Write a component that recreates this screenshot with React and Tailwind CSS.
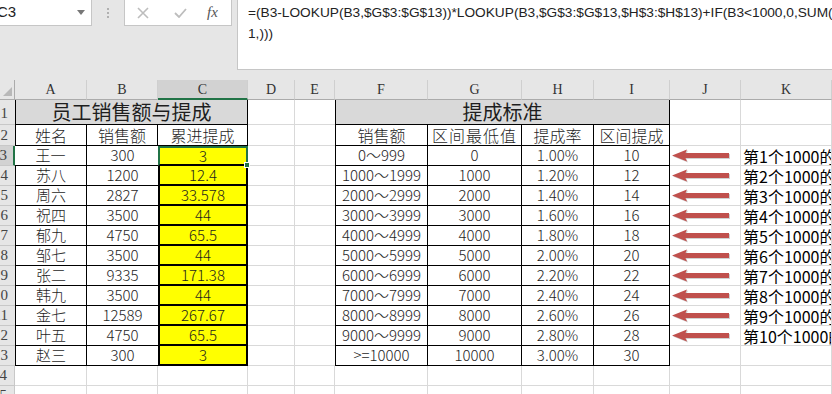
import { twMerge } from 'tailwind-merge'

// column widths: row header, A..K
const COLS = ['w-[15px]', 'w-[72px]', 'w-[71px]', 'w-[90px]', 'w-[47px]', 'w-[40px]', 'w-[93px]', 'w-[94px]', 'w-[72px]', 'w-[76px]', 'w-[71px]', 'w-[91px]']
const LETTERS = ['A', 'B', 'C', 'D', 'E', 'F', 'G', 'H', 'I', 'J', 'K']

const people = [
  ['王一', '300', '3'],
  ['苏八', '1200', '12.4'],
  ['周六', '2827', '33.578'],
  ['祝四', '3500', '44'],
  ['郁九', '4750', '65.5'],
  ['邹七', '3500', '44'],
  ['张二', '9335', '171.38'],
  ['韩九', '3500', '44'],
  ['金七', '12589', '267.67'],
  ['叶五', '4750', '65.5'],
  ['赵三', '300', '3'],
]

const rates = [
  ['0～999', '0', '1.00%', '10'],
  ['1000～1999', '1000', '1.20%', '12'],
  ['2000～2999', '2000', '1.40%', '14'],
  ['3000～3999', '3000', '1.60%', '16'],
  ['4000～4999', '4000', '1.80%', '18'],
  ['5000～5999', '5000', '2.00%', '20'],
  ['6000～6999', '6000', '2.20%', '22'],
  ['7000～7999', '7000', '2.40%', '24'],
  ['8000～8999', '8000', '2.60%', '26'],
  ['9000～9999', '9000', '2.80%', '28'],
  ['>=10000', '10000', '3.00%', '30'],
]

function Cell({ w, className, children }) {
  return (
    <div
      className={twMerge(
        'shrink-0 h-full flex items-center justify-center overflow-hidden whitespace-nowrap border-r border-b border-[#d9d9d9] text-[15px] font-light text-[#1e1e1e]',
        w,
        className
      )}
    >
      {children}
    </div>
  )
}

function RowHead({ n, className }) {
  return (
    <div
      className={twMerge(
        "shrink-0 w-[15px] h-full flex items-center justify-end pr-[7px] overflow-hidden bg-[#e6e6e6] border-r border-b border-[#c8c8c8] font-['Liberation_Serif',serif] text-[15px] text-[#444]",
        className
      )}
    >
      <span className="shrink-0">{n}</span>
    </div>
  )
}

function Arrow() {
  return (
    <svg width="62" height="16" viewBox="0 0 62 16">
      <path d="M2 8.5 L17 2.5 L15.5 6 L59 6 L59 11 L15.5 11 L17 14.5 Z" fill="rgba(0,0,0,0.18)" />
      <path d="M1 7.5 L16 1.5 L14.5 5 L58 5 L58 10 L14.5 10 L16 13.5 Z" fill="#c0504d" />
    </svg>
  )
}

function TopBar() {
  return (
    <div className="h-[80px] bg-[#e6e6e6] flex items-start">
      <div className="w-[92px] h-[26px] bg-white border-r border-b border-[#c6c6c6] flex items-center justify-between pr-[6px] overflow-hidden">
        <span className="-ml-[3px] text-[15px] text-[#222] font-['Liberation_Sans',sans-serif]">C3</span>
        <svg width="8" height="5" viewBox="0 0 8 5">
          <path d="M0 0 L8 0 L4 5 Z" fill="#777" />
        </svg>
      </div>
      <div className="w-[32px] h-[26px] flex flex-col items-center justify-center gap-[2px]">
        <span className="w-[2px] h-[2px] bg-[#b0b0b0]" />
        <span className="w-[2px] h-[2px] bg-[#b0b0b0]" />
        <span className="w-[2px] h-[2px] bg-[#b0b0b0]" />
      </div>
      <div className="w-[108px] h-[26px] bg-white border-x border-b border-[#c6c6c6] flex items-center pl-[12px]">
        <svg width="12" height="12" viewBox="0 0 12 12" className="mr-[25px]">
          <path d="M1 1 L11 11 M11 1 L1 11" stroke="#bdbdbd" strokeWidth="1.6" />
        </svg>
        <svg width="13" height="10" viewBox="0 0 13 10" className="mr-[20px]">
          <path d="M1 5 L5 9 L12 1" stroke="#bdbdbd" strokeWidth="1.8" fill="none" />
        </svg>
        <span className="italic font-['Liberation_Serif',serif] text-[15px] text-[#555]">fx</span>
      </div>
      <div className="ml-[5px] flex-1 h-[70px] bg-white border-l border-b border-[#c6c6c6] pl-[10px] pt-[2px] overflow-hidden font-['Liberation_Sans',sans-serif] text-[13.7px] leading-[21px] text-[#222]">
        <div className="whitespace-nowrap">=(B3-LOOKUP(B3,$G$3:$G$13))*LOOKUP(B3,$G$3:$G$13,$H$3:$H$13)+IF(B3&lt;1000,0,SUM(</div>
        <div className="whitespace-nowrap">1,)))</div>
      </div>
    </div>
  )
}

function ColumnHeader() {
  return (
    <div className="flex h-[20px]">
      <div className="shrink-0 w-[15px] h-full bg-[#e6e6e6] border-r border-b border-[#ababab] flex items-end justify-end pr-[2px] pb-[3px]">
        <svg width="9" height="9" viewBox="0 0 9 9">
          <path d="M9 0 L9 9 L0 9 Z" fill="#b8b8b8" />
        </svg>
      </div>
      {LETTERS.map((l, i) => (
        <div
          key={l}
          className={twMerge(
            "shrink-0 h-full flex items-center justify-center bg-[#e6e6e6] border-r border-b border-r-[#cfcfcf] border-b-[#ababab] font-['Liberation_Serif',serif] text-[14px] text-[#333]",
            COLS[i + 1],
            l === 'C' ? 'bg-[#d2d2d2] border-b-2 border-b-[#217346]' : ''
          )}
        >
          {l}
        </div>
      ))}
    </div>
  )
}

export default function App() {
  return (
    <div className="w-[832px] h-[394px] overflow-hidden bg-white font-['Noto_Sans_CJK_SC',sans-serif]">
      <TopBar />
      <ColumnHeader />

      {/* row 1: titles */}
      <div className="flex h-[25px]">
        <RowHead n="1" className="items-end -mb-[4px] border-r-0" />
        <Cell w="w-[233px]" className="bg-[#d9d9d9] border-l border-black text-[20px] font-normal">员工销售额与提成</Cell>
        <Cell w={COLS[4]} />
        <Cell w={COLS[5]} className="border-r-0" />
        <Cell w="w-[335px]" className="bg-[#d9d9d9] border-l border-black text-[20px] font-normal">提成标准</Cell>
        <Cell w={COLS[10]} />
        <Cell w={COLS[11]} />
      </div>

      {/* row 2: headers */}
      <div className="flex h-[21px]">
        <RowHead n="2" className="border-r-0" />
        <Cell w={COLS[1]} className="border-l border-black text-[16px]">姓名</Cell>
        <Cell w={COLS[2]} className="border-black text-[16px]">销售额</Cell>
        <Cell w={COLS[3]} className="border-black text-[16px]">累进提成</Cell>
        <Cell w={COLS[4]} />
        <Cell w={COLS[5]} className="border-r-0" />
        <Cell w={COLS[6]} className="border-l border-black text-[16px]">销售额</Cell>
        <Cell w={COLS[7]} className="border-black text-[16px] tracking-[1px]">区间最低值</Cell>
        <Cell w={COLS[8]} className="border-black text-[16px]">提成率</Cell>
        <Cell w={COLS[9]} className="border-black text-[16px]">区间提成</Cell>
        <Cell w={COLS[10]} />
        <Cell w={COLS[11]} />
      </div>

      {/* rows 3-13 */}
      {people.map((p, i) => {
        const selected = i === 0
        const r = rates[i]
        return (
          <div key={i} className="flex h-[20px]">
            <RowHead
              n={i + 3}
              className={selected ? 'bg-[#d2d2d2] border-r-2 border-r-[#217346] pr-[6px]' : 'border-r-0'}
            />
            <Cell w={COLS[1]} className={selected ? 'border-black' : 'border-l border-black'}>{p[0]}</Cell>
            <Cell w={COLS[2]} className="border-black border-r-0">{p[1]}</Cell>
            <Cell
              w={COLS[3]}
              className={
                selected
                  ? 'relative overflow-visible bg-[#ffff00] border-2 border-[#217346] border-b-black'
                  : 'bg-[#ffff00] border-x-2 border-b-2 border-black'
              }
            >
              {p[2]}
              {selected && (
                <span className="absolute -right-[4px] -bottom-[4px] w-[6px] h-[6px] bg-[#217346] border border-white" />
              )}
            </Cell>
            <Cell w={COLS[4]} />
            <Cell w={COLS[5]} className="border-r-0" />
            <Cell w={COLS[6]} className="border-l border-black">{r[0]}</Cell>
            <Cell w={COLS[7]} className="border-black">{r[1]}</Cell>
            <Cell w={COLS[8]} className="border-black">{r[2]}</Cell>
            <Cell w={COLS[9]} className="border-black">{r[3]}</Cell>
            <Cell w={COLS[10]} className="justify-start pl-[1px]">{i < 10 && <Arrow />}</Cell>
            <Cell w={COLS[11]} className="justify-start pl-[2px] text-[16px] font-normal text-black">
              {i < 10 ? `第${i + 1}个1000的` : ''}
            </Cell>
          </div>
        )
      })}

      {/* empty rows */}
      {[14, 15].map((n) => (
        <div key={n} className="flex h-[20px]">
          <RowHead n={n} />
          {COLS.slice(1).map((w, j) => (
            <Cell key={j} w={w} />
          ))}
        </div>
      ))}
    </div>
  )
}
